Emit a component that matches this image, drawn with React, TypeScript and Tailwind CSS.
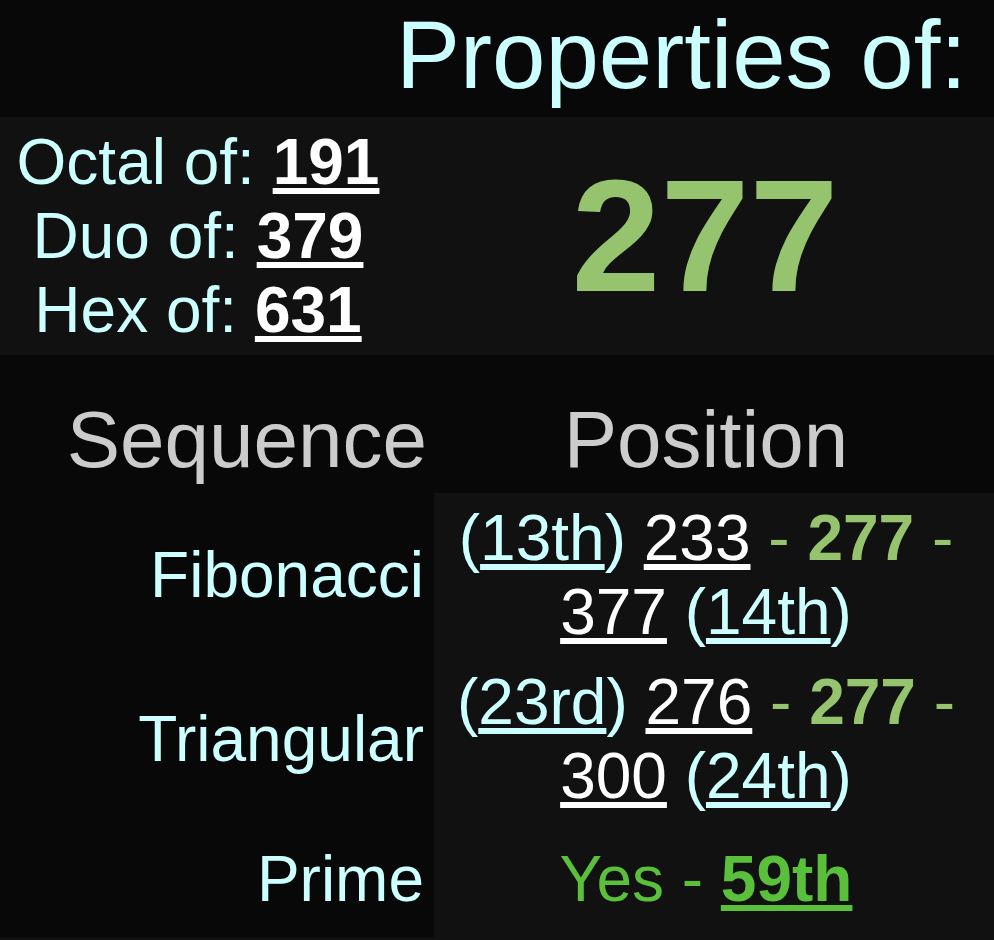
const cyan = 'text-[#ccffff]';

function Seq({ prev, prevPos, next, nextPos }: { prev: string; prevPos: string; next: string; nextPos: string }) {
  return (
    <>
      (<span className="underline">{prevPos}</span>){' '}
      <span className="text-white underline">{prev}</span>
      <span className="text-[#96c46e]">
        {' '}- <b className="font-bold">277</b> -{' '}
      </span>
      <span className="text-white underline">{next}</span> (<span className="underline">{nextPos}</span>)
    </>
  );
}

export default function App() {
  return (
    <div className={`min-h-screen bg-[#111111] font-['Liberation_Sans',Arial,sans-serif] leading-[normal] ${cyan}`}>
      <div className="bg-[#080808] pb-[7px] pr-[27px] text-right text-[96px] leading-[normal]">Properties of:</div>

      <div className="flex bg-[#111111] py-2">
        <div className="w-[396px] text-center text-[64px] leading-[normal]">
          <div>
            Octal of: <span className="font-bold text-white underline">191</span>
          </div>
          <div>
            Duo of: <span className="font-bold text-white underline">379</span>
          </div>
          <div>
            Hex of: <span className="font-bold text-white underline">631</span>
          </div>
        </div>
        <div className="flex flex-1 items-center justify-center pl-[20px] text-[160px] font-bold leading-[normal] text-[#96c46e]">
          277
        </div>
      </div>

      <div className="grid grid-cols-[434px_1fr] text-[64px] leading-[normal]">
        <div className="bg-[#080808] pb-[7px] pr-[7px] pt-[39px] text-right text-[80px] leading-[normal] text-[#cccccc]">
          Sequence
        </div>
        <div className="bg-[#080808] pb-[7px] pr-[16px] pt-[39px] text-center text-[80px] leading-[normal] text-[#cccccc]">
          Position
        </div>

        <div className="flex items-center justify-end bg-[#080808] pr-[10px]">Fibonacci</div>
        <div className="bg-[#111111] py-2 pr-[16px] text-center">
          <Seq prevPos="13th" prev="233" next="377" nextPos="14th" />
        </div>

        <div className="flex items-center justify-end bg-[#080808] pr-[10px]">Triangular</div>
        <div className="bg-[#111111] py-2 pr-[16px] text-center">
          <Seq prevPos="23rd" prev="276" next="300" nextPos="24th" />
        </div>

        <div className="flex h-[116px] items-center justify-end bg-[#080808] pr-[10px]">Prime</div>
        <div className="flex h-[116px] items-center justify-center bg-[#111111] pr-[16px] text-[#5abf3b]">
          <span>
            Yes - <b className="font-bold underline">59th</b>
          </span>
        </div>
      </div>
    </div>
  );
}
